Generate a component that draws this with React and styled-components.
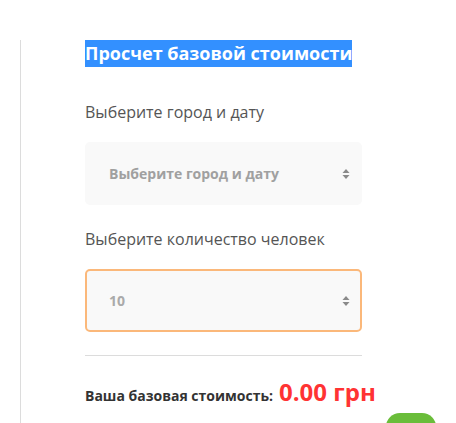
import React from "react";
import styled, { createGlobalStyle } from "styled-components";

const GlobalStyle = createGlobalStyle`
  body {
    margin: 0;
    background: #fff;
    font-family: "Open Sans", "Noto Sans", sans-serif;
    overflow: hidden;
  }
`;

const Page = styled.div`
  padding: 40px 0 0 20px;
  height: 383px;
`;

const Column = styled.div`
  border-left: 1px solid #dcdcdc;
  padding-left: 64px;
  height: 100%;
  width: 277px;
`;

const Title = styled.h2`
  margin: 0;
  display: inline-block;
  font-size: 18px;
  line-height: 27px;
  font-weight: 700;
  color: #fff;
  background: #3390ff;
`;

const Field = styled.div`
  display: flex;
  flex-direction: column;
  margin-top: ${({ first }) => (first ? "33px" : "22px")};
`;

const Label = styled.label`
  font-size: 16px;
  line-height: 24px;
  color: #555;
  margin-bottom: 18px;
`;

const SelectBox = styled.div`
  box-sizing: border-box;
  height: 63px;
  display: flex;
  align-items: center;
  justify-content: space-between;
  padding: 0 10px 0 22px;
  background: #f9f9f9;
  border: 2px solid ${({ active }) => (active ? "#fbb87a" : "#f9f9f9")};
  border-radius: 5px;
  font-size: 14px;
  font-weight: 700;
  color: ${({ active }) => (active ? "#aaa" : "#a0a0a0")};
`;

const Arrows = styled.svg`
  width: 8px;
  height: 12px;
  fill: #8a8a8a;
`;

const Divider = styled.hr`
  border: 0;
  border-top: 1px solid #dcdcdc;
  margin: 23px 0 0;
`;

const Total = styled.div`
  display: flex;
  align-items: baseline;
  gap: 6px;
  margin-top: 19px;
  white-space: nowrap;
`;

const TotalLabel = styled.span`
  font-size: 14px;
  font-weight: 700;
  color: #333;
`;

const TotalValue = styled.span`
  font-size: 24px;
  font-weight: 700;
  color: #ff3333;
`;

const FloatButton = styled.div`
  position: fixed;
  left: 386px;
  bottom: -30px;
  width: 50px;
  height: 40px;
  border-radius: 14px;
  background: #6abd3a;
`;

const SortArrows = () => (
  <Arrows viewBox="0 0 8 12">
    <path d="M4 1 L7.5 5 L0.5 5 Z" />
    <path d="M4 11 L7.5 7 L0.5 7 Z" />
  </Arrows>
);

export default function App() {
  return (
    <>
      <GlobalStyle />
      <Page>
        <Column>
          <Title>Просчет базовой стоимости</Title>
          <Field first>
            <Label>Выберите город и дату</Label>
            <SelectBox>
              <span>Выберите город и дату</span>
              <SortArrows />
            </SelectBox>
          </Field>
          <Field>
            <Label>Выберите количество человек</Label>
            <SelectBox active>
              <span>10</span>
              <SortArrows />
            </SelectBox>
          </Field>
          <Divider />
          <Total>
            <TotalLabel>Ваша базовая стоимость:</TotalLabel>
            <TotalValue>0.00 грн</TotalValue>
          </Total>
        </Column>
      </Page>
      <FloatButton />
    </>
  );
}
